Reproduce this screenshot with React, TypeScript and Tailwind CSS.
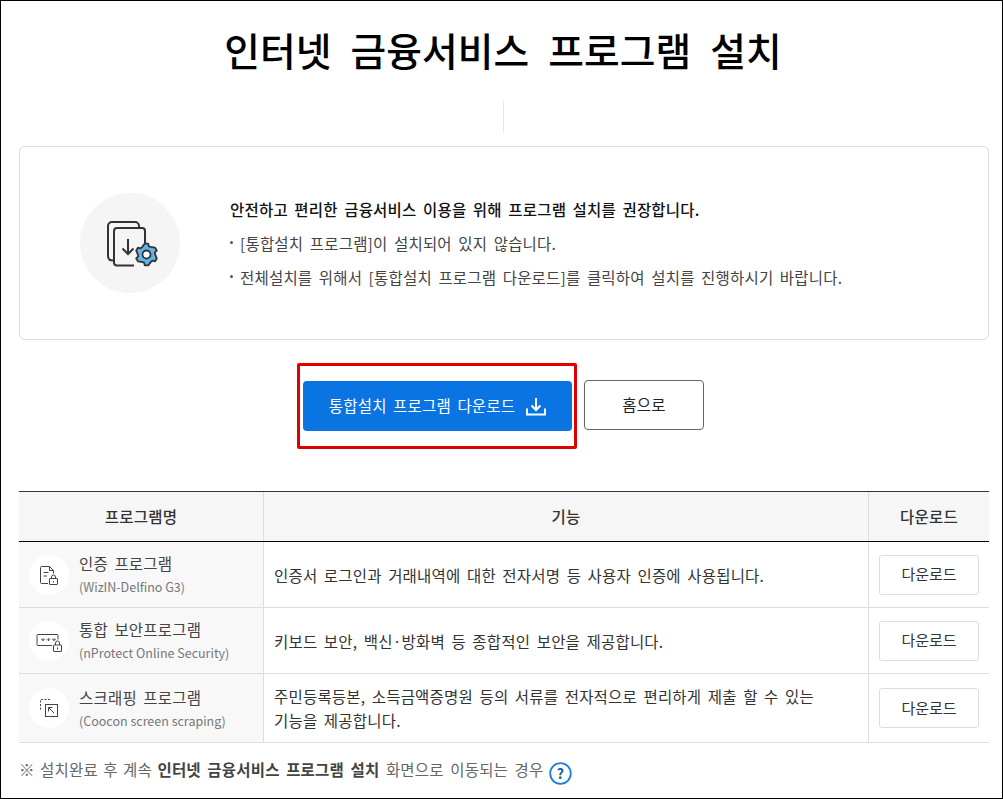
import React from "react";

const font = { fontFamily: '"Noto Sans CJK KR", "Noto Sans", sans-serif' };
const body = "text-[15.5px] tracking-[0.2px] [word-spacing:2.8px]";

function gearPath(cx: number, cy: number, outer: number, inner: number) {
  const pts: string[] = [];
  for (let i = 0; i < 6; i++) {
    const a = (Math.PI / 3) * i - Math.PI / 2;
    const offs: [number, number][] = [
      [-0.30, outer],
      [0.30, outer],
      [0.55, inner],
      [0.90, inner],
    ];
    offs.forEach(([d, r]) => {
      pts.push(`${(cx + r * Math.cos(a + d * (Math.PI / 6))).toFixed(2)} ${(cy + r * Math.sin(a + d * (Math.PI / 6))).toFixed(2)}`);
    });
  }
  return "M" + pts.join("L") + "Z";
}

function Install() {
  return (
    <svg width="52" height="47" viewBox="0 0 52 47" fill="none" className="ml-[4px] mt-[2px]">
      <path d="M7 39.500Q2 39.500 2 35V5a4 4 0 0 1 4-4H29a4 4 0 0 1 4 4v1" stroke="#333" strokeWidth="2" />
      <path d="M28 44.500H11a3 3 0 0 1-3-3V10a3 3 0 0 1 3-3H36a3 3 0 0 1 3 3V22" stroke="#333" strokeWidth="2" />
      <path d="M22 18V33M16.500 27.500 22 33 27.500 27.500" stroke="#333" strokeWidth="2" />
      <path d={gearPath(40.5, 33.5, 11, 8.5)} fill="#5fb5ea" stroke="#333" strokeWidth="1.800" strokeLinejoin="round" />
      <circle cx="40.500" cy="33.500" r="4" fill="#fff" stroke="#333" strokeWidth="1.800" />
    </svg>
  );
}

function CertIcon() {
  return (
    <svg width="24" height="24" viewBox="0 0 24 24" fill="none" stroke="#444" strokeWidth="1">
      <path d="M11 20.500H4.500a1 1 0 0 1-1-1V4.500a1 1 0 0 1 1-1h8l4 4v3" />
      <path d="M12.500 3.500v4h4M6.500 9.500h5M6.500 13h3.500" />
      <rect x="12.500" y="15.500" width="8" height="6" rx="0.500" />
      <path d="M14.500 15.500v-1.500a2 2 0 0 1 4 0v1.500M16.500 18v1.500" />
    </svg>
  );
}

function KeyIcon() {
  return (
    <svg width="26" height="24" viewBox="0 0 26 24" fill="none" stroke="#444" strokeWidth="1">
      <path d="M16 16.500H2a1 1 0 0 1-1-1V6.500a1 1 0 0 1 1-1h19a1 1 0 0 1 1 1v4" />
      <path d="M5 10l2 1.500M7 9v3M9 10l-2 1.500M10.500 10l2 1.500M12.500 9v3M14.500 10l-2 1.500M16 10l2 1.500M18 9v3M20 10l-2 1.500" strokeWidth="0.800" />
      <rect x="17.500" y="16" width="8" height="6.500" rx="0.500" />
      <path d="M19.500 16v-2a2 2 0 0 1 4 0v2M21.500 18.500v2" />
    </svg>
  );
}

function ScrapeIcon() {
  return (
    <svg width="24" height="24" viewBox="0 0 24 24" fill="none" stroke="#444" strokeWidth="1">
      <path d="M3.500 13.500v-10h10" strokeDasharray="2 1.500" />
      <rect x="8.500" y="8.500" width="12" height="12" />
      <path d="M17 17l-5.500-5.500M11.500 15.500v-4h4" />
    </svg>
  );
}

const rows = [
  {
    icon: <CertIcon />,
    name: "인증 프로그램",
    sub: "(WizIN-Delfino G3)",
    desc: ["인증서 로그인과 거래내역에 대한 전자서명 등 사용자 인증에 사용됩니다."],
    h: "h-[66px]",
  },
  {
    icon: <KeyIcon />,
    name: "통합 보안프로그램",
    sub: "(nProtect Online Security)",
    desc: ["키보드 보안, 백신·방화벽 등 종합적인 보안을 제공합니다."],
    h: "h-[66px]",
  },
  {
    icon: <ScrapeIcon />,
    name: "스크래핑 프로그램",
    sub: "(Coocon screen scraping)",
    desc: ["주민등록등본, 소득금액증명원 등의 서류를 전자적으로 편리하게 제출 할 수 있는", "기능을 제공합니다."],
    h: "h-[69px]",
  },
];

function Bullet({ children }: { children: React.ReactNode }) {
  return (
    <p className={`mt-[12px] flex items-center ${body} leading-[22px] text-[#444] whitespace-nowrap`}>
      <span className="w-[3px] h-[3px] rounded-full bg-[#555] mr-[7px] -mt-[1px]" />
      <span>{children}</span>
    </p>
  );
}

export default function App() {
  return (
    <div style={font} className="w-[1003px] h-[799px] overflow-hidden border border-black bg-white text-[#333] box-border">
      <div className="px-[18px]">
        <h1 className="text-center text-[38.800px] leading-[62px] pt-[17px] pl-[3px] font-medium text-black [word-spacing:10.5px] whitespace-nowrap">
          인터넷 금융서비스 프로그램 설치
        </h1>
        <div className="mx-auto mt-[21px] h-[31px] w-px bg-[#e5e5e5] translate-x-[2px]" />
        <div className="mt-[14px] h-[194px] w-[970px] rounded-[6px] border border-[#dddddd] flex items-center">
          <div className="ml-[60px] w-[100px] h-[100px] rounded-full bg-[#f5f5f5] flex items-center justify-center shrink-0">
            <Install />
          </div>
          <div className="ml-[50px]">
            <p className={`${body} leading-[22px] font-medium text-[#111] whitespace-nowrap`}>
              안전하고 편리한 금융서비스 이용을 위해 프로그램 설치를 권장합니다.
            </p>
            <Bullet>[통합설치 프로그램]이 설치되어 있지 않습니다.</Bullet>
            <Bullet>전체설치를 위해서 [통합설치 프로그램 다운로드]를 클릭하여 설치를 진행하시기 바랍니다.</Bullet>
          </div>
        </div>
        <div className="mt-[23px] flex pl-[278px] items-start">
          <div className="w-[280px] h-[86px] border-[3px] border-[#e00000] rounded-[2px] pl-[3px] pt-[15px]">
            <button className={`w-[269px] h-[50px] rounded-[4px] bg-[#0a74e2] text-white ${body} flex items-center justify-center gap-[11px] whitespace-nowrap`}>
              <span>통합설치 프로그램 다운로드</span>
              <svg width="20" height="19" viewBox="0 0 20 19" fill="none" stroke="#fff" strokeWidth="2">
                <path d="M10 1V13M5.500 8.500 10 13 14.500 8.500M1 11.500V17.500H19V11.500" />
              </svg>
            </button>
          </div>
          <button className={`ml-[7px] mt-[17px] w-[120px] h-[50px] rounded-[4px] border border-[#666] bg-white ${body} text-[#222]`}>
            홈으로
          </button>
        </div>
        <div className="mt-[42px] w-[970px] border-t border-t-[#333]">
          <div className={`grid grid-cols-[245px_605px_120px] h-[50px] bg-[#f6f6f6] border-b border-b-black ${body} font-medium text-[#333] items-stretch`}>
            <div className="flex items-center justify-center border-r border-[#dddddd]">프로그램명</div>
            <div className="flex items-center justify-center border-r border-[#dddddd]">기능</div>
            <div className="flex items-center justify-center">다운로드</div>
          </div>
          {rows.map((r) => (
            <div key={r.name} className={`grid grid-cols-[245px_605px_120px] ${r.h} border-b border-[#dddddd]`}>
              <div className="bg-[#f8f8f8] border-r border-[#dddddd] flex items-center pl-[10px]">
                <div className="w-[40px] h-[40px] rounded-full bg-white flex items-center justify-center shrink-0">{r.icon}</div>
                <div className="ml-[10px] whitespace-nowrap">
                  <div className={`${body} leading-[22px] text-[#444] -mt-[1px]`}>{r.name}</div>
                  <div className="mt-[4px] text-[12.500px] leading-[18px] text-[#777]">{r.sub}</div>
                </div>
              </div>
              <div className={`border-r border-[#dddddd] flex flex-col justify-center pl-[10px] ${body} leading-[24px] text-[#333] whitespace-nowrap`}>
                {r.desc.map((d) => (
                  <div key={d}>{d}</div>
                ))}
              </div>
              <div className="flex items-center pl-[10px]">
                <button className="w-[100px] h-[40px] rounded-[3px] border border-[#dddddd] bg-white text-[15px] text-[#333]">다운로드</button>
              </div>
            </div>
          ))}
        </div>
        <div className={`mt-[15px] flex items-start ${body} leading-[22px] text-[#666] whitespace-nowrap`}>
          <span><span className="[word-spacing:1.7px]">※ 설치완료 후 계속 </span><b className="font-bold text-[#444]">인터넷 금융서비스 프로그램 설치</b> 화면으로 이동되는 경우</span>
          <svg width="23" height="23" viewBox="0 0 23 23" className="ml-[6px] mt-[4px]">
            <circle cx="11.500" cy="11.500" r="10.300" fill="#fff" stroke="#1c7ed6" strokeWidth="1.800" />
            <text x="11.500" y="16.500" textAnchor="middle" fontSize="14" fontWeight="700" fill="#0a5fb0">?</text>
          </svg>
        </div>
      </div>
    </div>
  );
}
